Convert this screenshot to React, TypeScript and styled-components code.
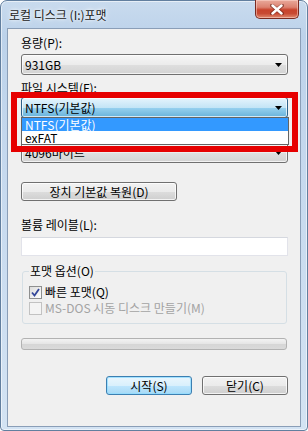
import styled, { createGlobalStyle } from 'styled-components';

const GlobalStyle = createGlobalStyle`
  html, body {
    margin: 0;
    padding: 0;
  }
  body {
    width: 308px;
    height: 431px;
    overflow: hidden;
    background: #ffffff;
    font-family: 'Noto Sans CJK KR', 'Noto Sans', 'DejaVu Sans', sans-serif;
    font-size: 12px;
    color: #000;
  }
`;

const Window = styled.div`
  box-sizing: border-box;
  width: 308px;
  height: 431px;
  display: flex;
  flex-direction: column;
  padding: 0 6px 3px;
  border: 1px solid #627f9f;
  border-radius: 7px 7px 4px 4px;
  background: linear-gradient(
    180deg,
    #c9dbee 0%,
    #bcd2ea 8%,
    #c6d9ee 40%,
    #d3e3f3 100%
  );
  box-shadow: inset 0 0 0 1px rgba(255, 255, 255, 0.55);
`;

const TitleBar = styled.div`
  height: 27px;
  display: flex;
  justify-content: space-between;
  align-items: flex-start;
  padding-left: 2px;
`;

const Title = styled.div`
  margin-top: 7px;
  line-height: 14px;
  font-size: 12px;
  color: #1a1a1a;
  text-shadow: 0 0 6px rgba(255, 255, 255, 0.95), 0 0 3px #ffffff;
`;

const CloseButton = styled.div`
  box-sizing: border-box;
  width: 44px;
  height: 19px;
  margin: -1px 2px 0 0;
  display: flex;
  align-items: center;
  justify-content: center;
  border: 1px solid #7a2a20;
  border-top: none;
  border-radius: 0 0 5px 5px;
  background: linear-gradient(
    180deg,
    #e9a99b 0%,
    #dc8270 40%,
    #c8432c 55%,
    #c84a33 75%,
    #e08a6f 100%
  );
  box-shadow: inset 0 0 0 1px rgba(255, 220, 210, 0.5);
`;

const Client = styled.div`
  flex: 1;
  display: flex;
  flex-direction: column;
  padding: 0 12px 0 13px;
  border: 1px solid #8a9eb7;
  background: #f0f0f0;
`;

const Label = styled.div<{ $top: number }>`
  margin-top: ${(p) => p.$top}px;
  line-height: 14px;
  height: 14px;
  white-space: nowrap;
`;

const Combo = styled.div<{ $top?: number; $open?: boolean }>`
  box-sizing: border-box;
  position: relative;
  margin-top: ${(p) => p.$top ?? 0}px;
  height: 21px;
  display: flex;
  align-items: center;
  justify-content: space-between;
  padding: 0 5px 0 3px;
  line-height: 14px;
  border: 1px solid ${(p) => (p.$open ? '#2c628b' : '#707070')};
  border-radius: 3px;
  background: ${(p) =>
    p.$open
      ? 'linear-gradient(180deg, #e5f4fc 0%, #c4e5f6 50%, #98d1ef 51%, #68b3db 100%)'
      : 'linear-gradient(180deg, #f6f6f6 0%, #ececec 50%, #dfdfdf 51%, #d3d3d3 100%)'};
  box-shadow: inset 0 0 0 1px rgba(255, 255, 255, 0.7);
`;

const ComboWrap = styled.div`
  position: relative;
  margin-top: 2px;
`;

const List = styled.div`
  position: absolute;
  z-index: 2;
  top: 20px;
  left: 0;
  right: -1px;
  border: 1px solid #646464;
  background: #ffffff;
`;

const Option = styled.div<{ $active?: boolean }>`
  height: 13px;
  line-height: 13px;
  padding-left: 3px;
  color: ${(p) => (p.$active ? '#ffffff' : '#000000')};
  background: ${(p) => (p.$active ? '#3399ff' : 'transparent')};
`;

const Highlight = styled.div`
  position: absolute;
  z-index: 3;
  left: -10px;
  right: -10px;
  top: -5px;
  height: 60px;
  box-sizing: border-box;
  border: 6px solid #e60000;
  pointer-events: none;
`;

const Button = styled.div<{ $top?: number; $width: number; $default?: boolean }>`
  box-sizing: border-box;
  margin-top: ${(p) => p.$top ?? 0}px;
  width: ${(p) => p.$width}px;
  height: 19px;
  display: flex;
  align-items: center;
  justify-content: center;
  line-height: 14px;
  white-space: nowrap;
  border: 1px solid ${(p) => (p.$default ? '#3c7fb1' : '#707070')};
  border-radius: 3px;
  background: ${(p) =>
    p.$default
      ? 'linear-gradient(180deg, #eaf6fd 0%, #d9f0fc 50%, #bee6fd 51%, #a7d9f5 100%)'
      : 'linear-gradient(180deg, #f2f2f2 0%, #ebebeb 50%, #dddddd 51%, #cfcfcf 100%)'};
  box-shadow: inset 0 0 0 1px ${(p) => (p.$default ? 'rgba(145, 220, 255, 0.8)' : 'rgba(255, 255, 255, 0.75)')};
`;

const TextBox = styled.div`
  box-sizing: border-box;
  margin-top: 5px;
  height: 19px;
  border: 1px solid #e2e3ea;
  border-top-color: #d5d8df;
  background: #ffffff;
`;

const Group = styled.fieldset`
  margin: 8px 1px 0 1px;
  padding: 6px 8px 7px 6px;
  border: 1px solid #d5dfe5;
  border-radius: 3px;
  display: flex;
  flex-direction: column;
  min-width: 0;
`;

const Legend = styled.legend`
  padding: 0 1px;
  line-height: 14px;
`;

const CheckRow = styled.div<{ $disabled?: boolean }>`
  height: 16px;
  display: flex;
  align-items: center;
  gap: 3px;
  line-height: 14px;
  white-space: nowrap;
  color: ${(p) => (p.$disabled ? '#a3a3a3' : '#000000')};
`;

const CheckBox = styled.div<{ $disabled?: boolean }>`
  box-sizing: border-box;
  width: 13px;
  height: 13px;
  display: flex;
  align-items: center;
  justify-content: center;
  border: 1px solid ${(p) => (p.$disabled ? '#c2c2c2' : '#8e8f8f')};
  background: ${(p) =>
    p.$disabled ? '#f4f4f4' : 'linear-gradient(135deg, #dcdcdc 0%, #f4f4f4 70%, #ffffff 100%)'};
`;

const Progress = styled.div`
  box-sizing: border-box;
  margin-top: 14px;
  height: 12px;
  width: 266px;
  border: 1px solid #b2b2b2;
  border-radius: 3px;
  background: linear-gradient(180deg, #f3f3f3 0%, #e6e6e6 45%, #d6d6d6 55%, #dadada 100%);
`;

const Footer = styled.div`
  margin-top: 26px;
  display: flex;
  justify-content: flex-end;
  gap: 10px;
`;

const Arrow = () => (
  <svg width="7" height="4" viewBox="0 0 7 4">
    <path d="M0 0 H7 L3.5 4 Z" fill="#000" />
  </svg>
);

export default function App() {
  return (
    <>
      <GlobalStyle />
      <Window>
        <TitleBar>
          <Title>로컬 디스크 (I:)포맷</Title>
          <CloseButton>
            <svg width="14" height="11" viewBox="0 0 14 11">
              <path
                d="M2 1.5 L12 9.5 M12 1.5 L2 9.5"
                stroke="#5a1a10"
                strokeWidth="4"
                strokeLinecap="round"
                opacity="0.55"
              />
              <path
                d="M2.5 1.5 L11.5 9.5 M11.5 1.5 L2.5 9.5"
                stroke="#ffffff"
                strokeWidth="2.4"
                strokeLinecap="round"
              />
            </svg>
          </CloseButton>
        </TitleBar>
        <Client>
          <Label $top={7}>용량(P):</Label>
          <Combo $top={4}>
            <span>931GB</span>
            <Arrow />
          </Combo>
          <Label $top={6}>파일 시스템(F):</Label>
          <ComboWrap>
            <Combo $open>
              <span>NTFS(기본값)</span>
              <Arrow />
            </Combo>
            <List>
              <Option $active>NTFS(기본값)</Option>
              <Option>exFAT</Option>
            </List>
            <Highlight />
          </ComboWrap>
          <Combo $top={24}>
            <span>4096바이트</span>
            <Arrow />
          </Combo>
          <Button $top={19} $width={156}>
            장치 기본값 복원(D)
          </Button>
          <Label $top={17}>볼륨 레이블(L):</Label>
          <TextBox />
          <Group>
            <Legend>포맷 옵션(O)</Legend>
            <CheckRow>
              <CheckBox>
                <svg width="9" height="9" viewBox="0 0 9 9">
                  <path
                    d="M1 4.5 L3.5 7.5 L8 1"
                    fill="none"
                    stroke="#34479a"
                    strokeWidth="1.8"
                  />
                </svg>
              </CheckBox>
              빠른 포맷(Q)
            </CheckRow>
            <CheckRow $disabled>
              <CheckBox $disabled />
              MS-DOS 시동 디스크 만들기(M)
            </CheckRow>
          </Group>
          <Progress />
          <Footer>
            <Button $width={86} $default>
              시작(S)
            </Button>
            <Button $width={86}>닫기(C)</Button>
          </Footer>
        </Client>
      </Window>
    </>
  );
}
